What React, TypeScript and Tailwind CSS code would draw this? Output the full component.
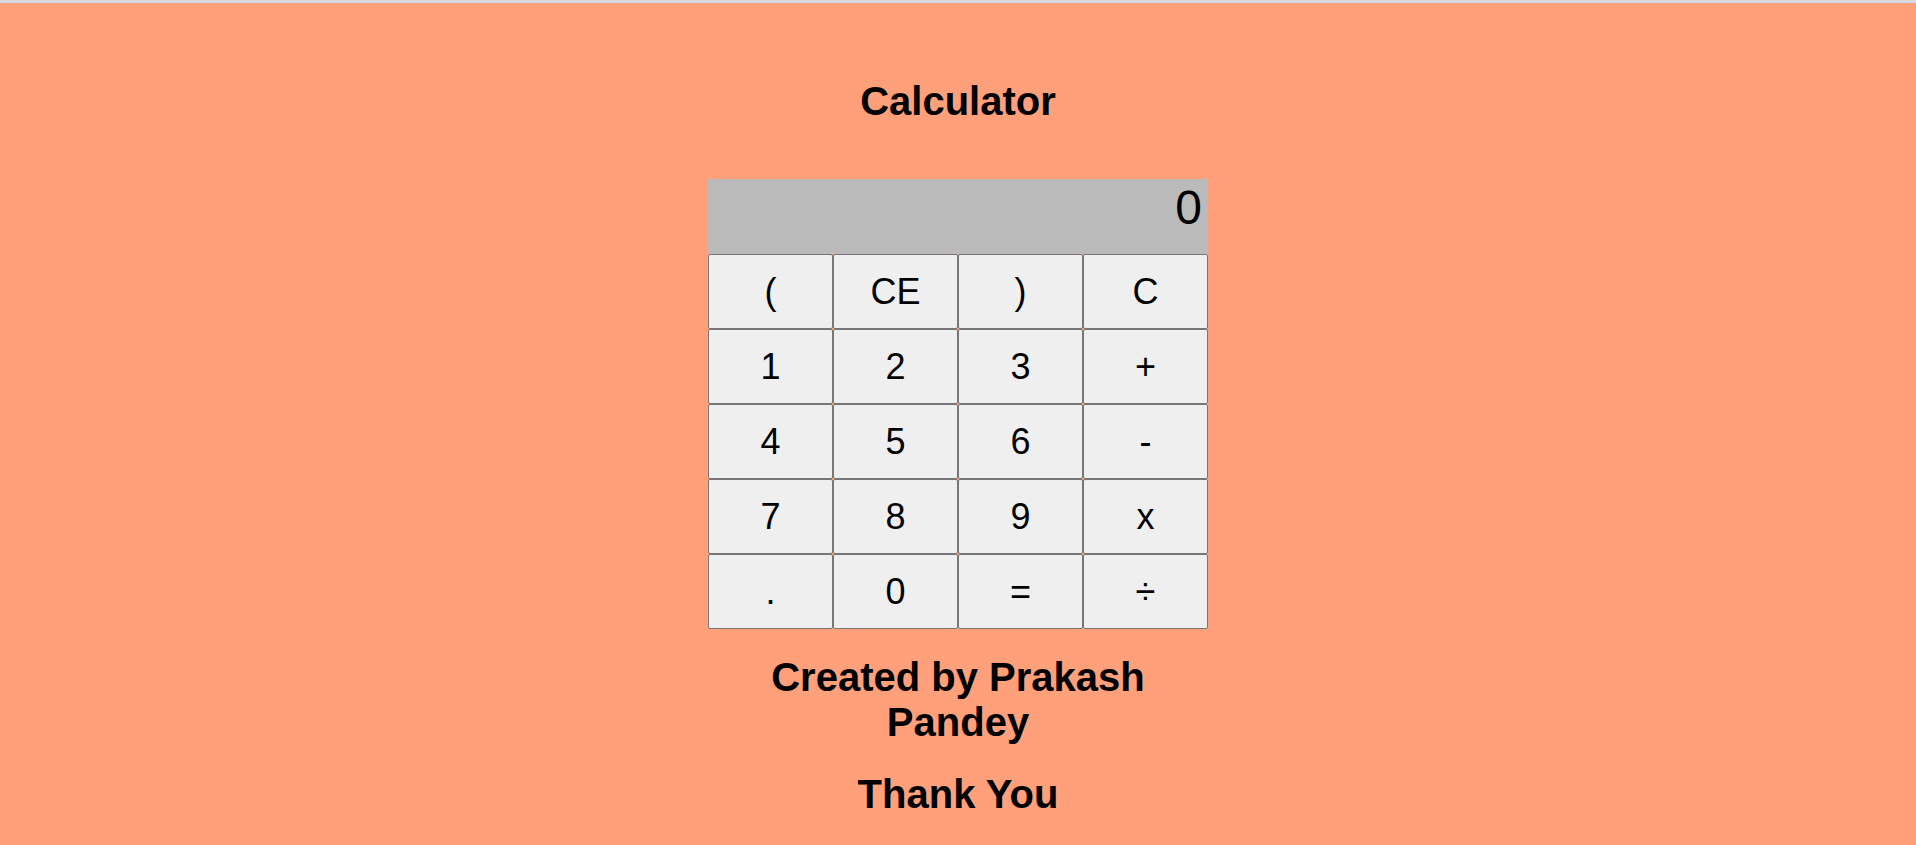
import React, { useState } from 'react';

const KEYS = ['(', 'CE', ')', 'C', '1', '2', '3', '+', '4', '5', '6', '-', '7', '8', '9', 'x', '.', '0', '=', '÷'];

export default function App() {
  const [display, setDisplay] = useState('0');

  const press = (k: string) => {
    if (k === 'C') return setDisplay('0');
    if (k === 'CE') return setDisplay((d) => (d.length > 1 ? d.slice(0, -1) : '0'));
    if (k === '=') {
      try {
        const expr = display.replace(/x/g, '*').replace(/÷/g, '/');
        // eslint-disable-next-line no-new-func
        const v = Function(`return (${expr})`)();
        setDisplay(String(v));
      } catch {
        setDisplay('Error');
      }
      return;
    }
    setDisplay((d) => (d === '0' || d === 'Error' ? k : d + k));
  };

  return (
    <div className="min-h-screen bg-[#ffa07a] text-black" style={{ fontFamily: '"Liberation Sans", Arial, sans-serif' }}>
      <div className="h-[3px] bg-[#d6d6dd]" />
      <div className="flex flex-col items-center">
        <h1 className="mt-[76px] text-[40px] leading-[45px] font-bold">Calculator</h1>

        <div className="mt-[55px] w-[500px]">
          <div className="h-[75px] bg-[#bababa] pt-[2px] pr-[6px] text-right text-[48px] leading-[54px] overflow-hidden">
            {display}
          </div>
          <div className="grid grid-cols-4">
            {KEYS.map((k) => (
              <button
                key={k}
                onClick={() => press(k)}
                className="h-[75px] border border-[#767676] rounded-[2px] bg-[#efefef] text-[36px] leading-none cursor-pointer"
              >
                {k}
              </button>
            ))}
          </div>
        </div>

        <h1 className="mt-[26px] w-[500px] text-center text-[40px] leading-[45px] font-bold">Created by Prakash Pandey</h1>
        <h1 className="mt-[27px] text-[40px] leading-[45px] font-bold">Thank You</h1>
      </div>
    </div>
  );
}
